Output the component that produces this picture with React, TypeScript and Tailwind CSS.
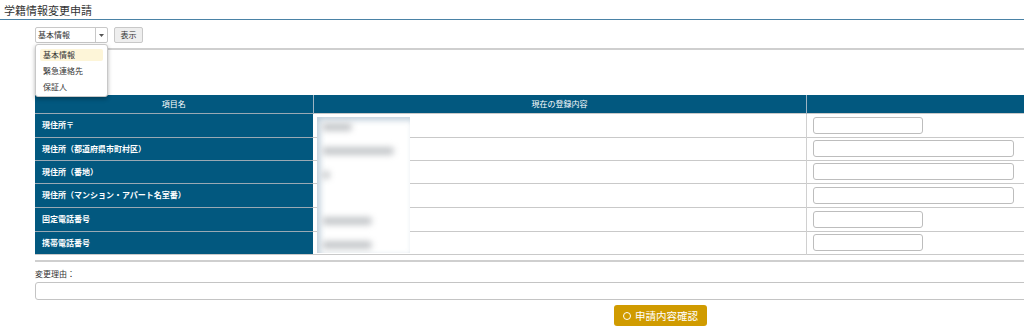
const rows = [
  { label: "現住所〒", h: "h-[24px]", wide: false },
  { label: "現住所（都道府県市町村区）", h: "h-[23px]", wide: true },
  { label: "現住所（番地）", h: "h-[23px]", wide: true },
  { label: "現住所（マンション・アパート名室番）", h: "h-[24px]", wide: true },
  { label: "固定電話番号", h: "h-[24px]", wide: false },
  { label: "携帯電話番号", h: "h-[23px]", wide: false },
];

// ぼかし部分（個人情報）
const blurBars = [
  { top: "top-[6px]", w: "w-[30px]" },
  { top: "top-[30px]", w: "w-[72px]" },
  { top: "top-[54px]", w: "w-[8px]" },
  { top: "top-[100px]", w: "w-[50px]" },
  { top: "top-[124px]", w: "w-[50px]" },
];

const App = () => {
  return (
    <div
      className="w-[1024px] h-[329px] overflow-hidden bg-white text-[#333]"
      style={{ fontFamily: '"Noto Sans CJK JP", "Noto Sans", sans-serif' }}
    >
      <div className="h-[20px] border-b border-[#4a82a6] pl-[4px] pt-[3px] text-[11px] leading-[14px] w-[1024px]">
        学籍情報変更申請
      </div>

      <div className="relative ml-[35px] mt-[7px] flex gap-[6px]">
        <div className="flex h-[16px] w-[73px] rounded-[2px] border border-[#c8c8c8] bg-white">
          <div className="flex-1 pl-[2px] text-[8px] leading-[14px]">基本情報</div>
          <div className="flex w-[12px] items-center justify-center border-l border-[#c8c8c8]">
            <svg width="5" height="3" viewBox="0 0 5 3">
              <path d="M0 0h5L2.5 3z" fill="#555" />
            </svg>
          </div>
        </div>
        <button className="h-[16px] w-[29px] rounded-[2px] border border-[#c8c8c8] bg-[#eeeeee] text-[8px] leading-[14px]">
          表示
        </button>

        <div className="absolute left-0 top-[17px] z-10 w-[73px] h-[53px] rounded-[3px] border border-[#c8c8c8] bg-white px-[4px] pt-[4px] shadow-[0_2px_4px_rgba(0,0,0,0.3)] text-[8px]">
          <div className="h-[12px] rounded-[2px] bg-[#fdf5d8] pl-[3px] leading-[12px]">基本情報</div>
          <div className="mt-[4px] h-[12px] pl-[3px] leading-[12px]">緊急連絡先</div>
          <div className="mt-[4px] h-[12px] pl-[3px] leading-[12px]">保証人</div>
        </div>
      </div>

      <div className="ml-[35px] mt-[5px] border-t-2 border-[#cfcfcf]" />

      <div className="relative ml-[35px] mt-[45px] w-[1005px]">
        <table className="w-[1005px] border-collapse table-fixed text-[8px]">
          <colgroup>
            <col className="w-[278px]" />
            <col className="w-[493px]" />
            <col />
          </colgroup>
          <thead>
            <tr className="h-[18px] bg-[#02587f] text-white">
              <th className="border-r border-[#9db4c3] font-normal">項目名</th>
              <th className="border-r border-[#9db4c3] font-normal">現在の登録内容</th>
              <th className="font-normal"></th>
            </tr>
          </thead>
          <tbody>
            {rows.map((r) => (
              <tr key={r.label} className={r.h + " border-t border-[#c9c9c9]"}>
                <td className="bg-[#02587f] pl-[7px] font-bold text-white border-t border-[#9aa9b4]">
                  {r.label}
                </td>
                <td className="border-r border-[#d0d0d0]"></td>
                <td className="p-0 pl-[6px]">
                  <div
                    className={
                      (r.wide ? "w-[201px]" : "w-[110px]") +
                      " h-[17px] rounded-[3px] border border-[#bdbdbd] bg-white"
                    }
                  />
                </td>
              </tr>
            ))}
            <tr className="border-t border-[#c9c9c9]"></tr>
          </tbody>
        </table>

        <div className="absolute left-[282px] top-[22px] h-[136px] w-[93px] overflow-hidden bg-white shadow-[inset_3px_3px_6px_rgba(90,130,160,0.4)]">
          {blurBars.map((b, i) => (
            <div
              key={i}
              className={"absolute left-[5px] h-[8px] rounded bg-[#c4c7ca] blur-[3px] " + b.top + " " + b.w}
            />
          ))}
        </div>
      </div>

      <div className="ml-[35px] mt-[6px] border-t-2 border-[#cfcfcf]" />

      <div className="ml-[35px] mt-[6px] text-[8px] leading-[12px]">変更理由：</div>
      <div className="ml-[35px] mt-[2px] h-[18px] w-[1010px] rounded-[3px] border border-[#c4c4c4] bg-white" />

      <button className="ml-[614px] mt-[5px] flex h-[21px] w-[93px] items-center justify-center gap-[4px] rounded-[3px] bg-[#d09b00] text-[10.5px] text-white">
        <span className="inline-block h-[8px] w-[8px] rounded-full border-[1.5px] border-white" />
        申請内容確認
      </button>
    </div>
  );
};

export default App;
